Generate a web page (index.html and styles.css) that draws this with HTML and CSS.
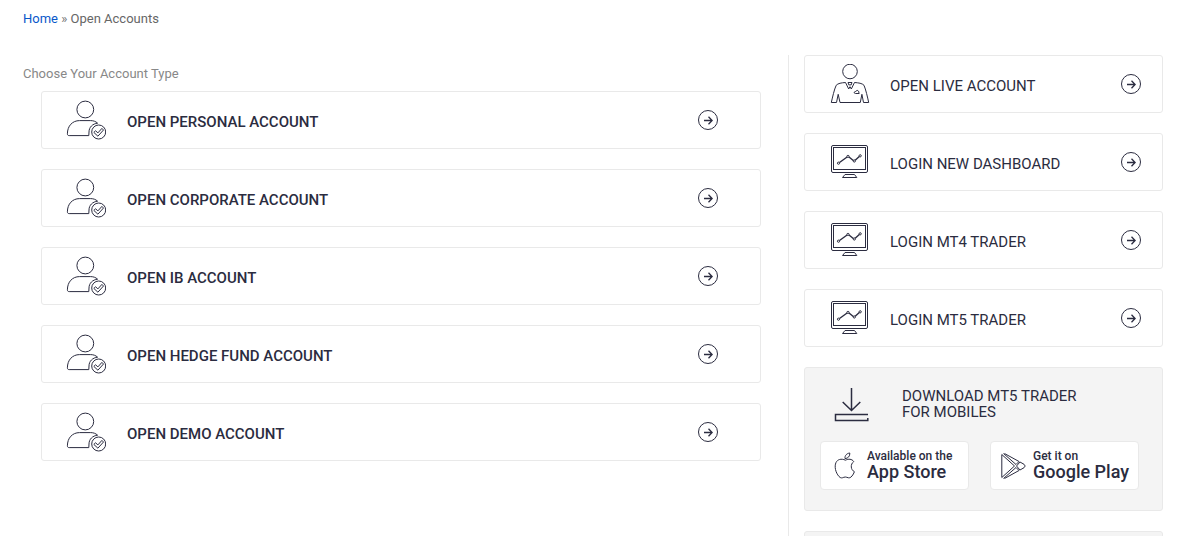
FILE: index.html
```
<!DOCTYPE html>
<html lang="en">
<head>
  <meta charset="utf-8">
  <title>Open Accounts</title>
  <link rel="stylesheet" href="styles.css">
</head>
<body>
  <!-- shared icons -->
  <svg class="sprite" aria-hidden="true">
    <symbol id="icon-user" viewBox="0 0 40 40">
      <circle cx="19.3" cy="9.5" r="8.4"/>
      <path d="M22.8 35.6H3.2c-1.2 0-1.8-.6-1.8-1.8C1.4 26 6.400 20.600 13.500 20.600h11.200c2.800 0 5 .9 6.900 2.600-5 .5-8.600 4-8.600 8.800 0 1.300-.1 2.400-.2 3.600z"/>
      <circle cx="32.700" cy="32" r="7"/>
      <path d="M27.800 32.400l1.800-1.600 2.300 2.100 4-4.500 1.600 1.600-5.600 6.200z"/>
    </symbol>
    <symbol id="icon-agent" viewBox="0 0 40 40">
      <circle cx="20" cy="7.500" r="7.300"/>
      <path d="M15.500 18.500c-4 .3-7.500.8-9.300 2.800C4.200 25.500 2.600 33 1.300 38.500h5.200l1.700-8.200 1.800 8.200h20.300l1.600-8.200 1.600 8.200h5.200C37.500 33 35.800 25.500 34 21.300c-1.800-2-5.500-2.500-9.500-2.800"/>
      <path d="M15.500 18.500l3.200 6.500 1.300-2.300 1.300 2.300 3.200-6.500M18 18.500h4l-.8 2.400h-2.400z"/>
      <path d="M24 28.700c.4-1 1-1.300 1.900-1.200.5-1.500 2-1.400 2.600-.3l.7 2.300h-3.600z"/>
    </symbol>
    <symbol id="icon-monitor" viewBox="0 0 40 40">
      <rect x="1.500" y="3.500" width="36" height="27" rx="1.500"/>
      <rect x="3.500" y="5.500" width="32" height="22"/>
      <path d="M15 32.500h9.500l2.300 3H12.500z"/>
      <path stroke-width="1.400" d="M9.500 20.500l7.600-5.500M19 15l4.300 3.500M25.200 18.300l4.100-3.700"/>
      <circle cx="8.500" cy="21.200" r="1.100"/>
      <circle cx="18" cy="14.400" r="1.100"/>
      <circle cx="24.300" cy="19" r="1.100"/>
      <circle cx="30.200" cy="13.800" r="1.100"/>
    </symbol>
    <symbol id="icon-arrow" viewBox="0 0 22 22">
      <circle cx="11" cy="11" r="9.500"/>
      <path stroke-width="1.300" d="M7 11.500h8M11.500 7.800l3.600 3.700-3.600 3.700"/>
    </symbol>
    <symbol id="icon-download" viewBox="0 0 36 36">
      <path d="M17.500 2v22M8.700 16l8.800 8.500 8.800-8.500M34 28.500H1.500v6h32.300v-2.500"/>
    </symbol>
    <symbol id="icon-apple" viewBox="0 0 22 28">
      <path d="M19.800 9.500c-2-2.600-5.300-2.900-8.300-1.300C7 6.200 3.500 7.500 2 10.500.2 14.500 1.500 20.500 5 24.500c1.700 1.900 3.200 1.500 4.800.8 1-.4 2-.4 3 0 2.400 1 3.700.6 5.200-1.300 1-1.200 1.900-2.700 2.400-4.300-3.700-1.800-4.400-7.400-.6-10.200z"/>
      <path d="M11 6.600C10.600 3.600 12.800 1.300 15.800 1c.3 3.200-1.800 5.500-4.800 5.600z"/>
    </symbol>
    <symbol id="icon-play" viewBox="0 0 26 28">
      <path d="M1.800 2.500v23"/>
      <path d="M1.800 2.500l12.700 11.500-12.700 11.500M3.500 1.500L16 12.500l3-3L4.500 1.500M3.500 26.500L16 15.500l3 3L4.500 26.500"/>
      <path d="M16.500 14l3.500-4 4 2.300c1.300.8 1.300 2.600 0 3.400l-4 2.300z"/>
    </symbol>
  </svg>

  <nav class="breadcrumb">
    <a href="#">Home</a> » <span>Open Accounts</span>
  </nav>

  <div class="page">
    <main class="content">
      <p class="intro">Choose Your Account Type</p>
      <div class="accounts">
        <a class="card" href="#">
          <svg class="icon"><use href="#icon-user"/></svg>
          <span class="label">OPEN PERSONAL ACCOUNT</span>
          <svg class="arrow"><use href="#icon-arrow"/></svg>
        </a>
        <a class="card" href="#">
          <svg class="icon"><use href="#icon-user"/></svg>
          <span class="label">OPEN CORPORATE ACCOUNT</span>
          <svg class="arrow"><use href="#icon-arrow"/></svg>
        </a>
        <a class="card" href="#">
          <svg class="icon"><use href="#icon-user"/></svg>
          <span class="label">OPEN IB ACCOUNT</span>
          <svg class="arrow"><use href="#icon-arrow"/></svg>
        </a>
        <a class="card" href="#">
          <svg class="icon"><use href="#icon-user"/></svg>
          <span class="label">OPEN HEDGE FUND ACCOUNT</span>
          <svg class="arrow"><use href="#icon-arrow"/></svg>
        </a>
        <a class="card" href="#">
          <svg class="icon"><use href="#icon-user"/></svg>
          <span class="label">OPEN DEMO ACCOUNT</span>
          <svg class="arrow"><use href="#icon-arrow"/></svg>
        </a>
      </div>
    </main>

    <aside class="sidebar">
      <a class="card" href="#">
        <svg class="icon"><use href="#icon-agent"/></svg>
        <span class="label">OPEN LIVE ACCOUNT</span>
        <svg class="arrow"><use href="#icon-arrow"/></svg>
      </a>
      <a class="card" href="#">
        <svg class="icon"><use href="#icon-monitor"/></svg>
        <span class="label">LOGIN NEW DASHBOARD</span>
        <svg class="arrow"><use href="#icon-arrow"/></svg>
      </a>
      <a class="card" href="#">
        <svg class="icon"><use href="#icon-monitor"/></svg>
        <span class="label">LOGIN MT4 TRADER</span>
        <svg class="arrow"><use href="#icon-arrow"/></svg>
      </a>
      <a class="card" href="#">
        <svg class="icon"><use href="#icon-monitor"/></svg>
        <span class="label">LOGIN MT5 TRADER</span>
        <svg class="arrow"><use href="#icon-arrow"/></svg>
      </a>

      <section class="download">
        <div class="download-title">
          <svg class="download-icon"><use href="#icon-download"/></svg>
          <h2>DOWNLOAD MT5 TRADER<br>FOR MOBILES</h2>
        </div>
        <div class="stores">
          <a class="store app-store" href="#">
            <svg class="store-icon"><use href="#icon-apple"/></svg>
            <span><small>Available on the</small><strong>App Store</strong></span>
          </a>
          <a class="store" href="#">
            <svg class="store-icon"><use href="#icon-play"/></svg>
            <span><small>Get it on</small><strong>Google Play</strong></span>
          </a>
        </div>
      </section>

      <section class="download"></section>
    </aside>
  </div>
</body>
</html>
```
FILE: styles.css
```
* {
  box-sizing: border-box;
}

body {
  margin: 0;
  padding: 9px 23px 0;
  background-color: #fff;
  color: #777;
  font-family: Roboto, "Liberation Sans", sans-serif;
  font-size: 13px;
  line-height: 20px;
}

a {
  color: #0a58ca;
  text-decoration: none;
}

svg {
  flex: none;
  fill: none;
  stroke: #2b2c40;
  stroke-width: 1;
}

.sprite {
  display: none;
}

.breadcrumb span {
  color: #666;
}

.page {
  display: grid;
  grid-template-columns: 1fr 375px;
  margin-top: 26px;
}

.content {
  padding: 9px 27px 0 0;
}

.intro {
  margin: 0 0 7px;
  color: #888;
}

.accounts,
.sidebar {
  display: flex;
  flex-direction: column;
  gap: 20px;
}

.accounts {
  padding-left: 18px;
}

.sidebar {
  border-left: 1px solid #e9e9e9;
  padding-left: 15px;
}

.card {
  display: flex;
  align-items: center;
  gap: 20px;
  height: 58px;
  padding: 0 20px 0 25px;
  border: 1px solid #e9e9e9;
  border-radius: 3px;
  background-color: #fff;
  color: #2b2c40;
  font-size: 15px;
}

.accounts .card {
  gap: 21px;
  padding: 0 41px 0 24px;
  font-weight: 500;
}

.icon {
  width: 40px;
  height: 40px;
}

.label {
  flex: 1;
  padding-top: 3px;
}

.arrow {
  width: 22px;
  height: 22px;
}

.download {
  padding: 18px 23px 20px 15px;
  border: 1px solid #e9e9e9;
  border-radius: 3px;
  background-color: #f4f4f4;
}

.download-title {
  display: flex;
  align-items: center;
  gap: 32px;
  padding-left: 14px;
}

.download-title h2 {
  margin: 0;
  color: #2b2c40;
  font-size: 15px;
  font-weight: 400;
  line-height: 16px;
}

.download-icon {
  width: 36px;
  height: 36px;
  stroke-width: 1.5;
}

.stores {
  display: grid;
  grid-template-columns: 1fr 1fr;
  gap: 21px;
  margin-top: 19px;
}

.store {
  display: flex;
  align-items: center;
  gap: 7px;
  height: 49px;
  padding-left: 9px;
  border: 1px solid #e9e9e9;
  border-radius: 4px;
  background-color: #fff;
  color: #2b2c40;
  white-space: nowrap;
}

.app-store {
  gap: 9px;
  padding-left: 11px;
}

.store span {
  padding-bottom: 2px;
}

.store small,
.store strong {
  display: block;
  font-weight: 500;
}

.store small {
  font-size: 12px;
  line-height: 14px;
}

.store strong {
  font-size: 18px;
  line-height: 18px;
}

.store-icon {
  width: 26px;
  height: 28px;
}
```
